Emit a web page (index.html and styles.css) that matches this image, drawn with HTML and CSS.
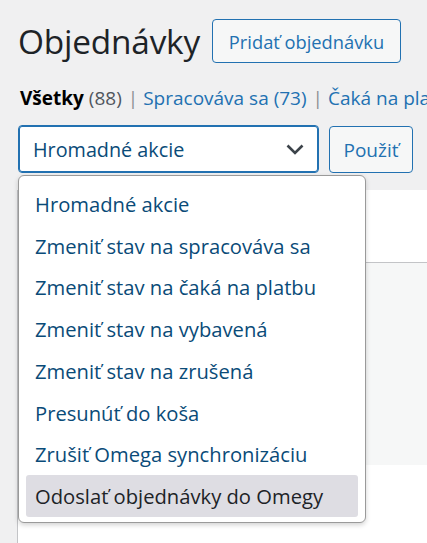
FILE: index.html
```html
<!DOCTYPE html>
<html lang="sk">
<head>
<meta charset="utf-8">
<title>Objednávky</title>
<link rel="stylesheet" href="styles.css">
</head>
<body>
<div class="page">
  <div class="header">
    <h1 class="title">Objednávky</h1>
    <a class="btn btn-add" href="#">Pridať objednávku</a>
  </div>
  <ul class="subsubsub">
    <li><span class="current">Všetky</span> <span class="count">(88)</span></li>
    <li class="sep">|</li>
    <li><a href="#">Spracováva sa <span class="count-link">(73)</span></a></li>
    <li class="sep">|</li>
    <li><a href="#">Čaká na platbu <span class="count-link">(5)</span></a></li>
  </ul>
  <div class="tablenav">
    <div class="select-wrap">
      <div class="select">
        <span>Hromadné akcie</span>
        <svg class="chev" width="18" height="11" viewBox="0 0 18 11"><path d="M1.5 1.5 L9 9 L16.5 1.5" fill="none" stroke="#3c434a" stroke-width="2.6"/></svg>
      </div>
      <ul class="menu">
        <li>Hromadné akcie</li>
        <li>Zmeniť stav na spracováva sa</li>
        <li>Zmeniť stav na čaká na platbu</li>
        <li>Zmeniť stav na vybavená</li>
        <li>Zmeniť stav na zrušená</li>
        <li>Presunúť do koša</li>
        <li>Zrušiť Omega synchronizáciu</li>
        <li class="active">Odoslať objednávky do Omegy</li>
      </ul>
    </div>
    <a class="btn btn-apply" href="#">Použiť</a>
  </div>
  <div class="table">
    <div class="thead"></div>
    <div class="row alt"></div>
    <div class="row"></div>
  </div>
</div>
</body>
</html>
```

FILE: styles.css
```css
* { box-sizing: border-box; }
html, body { margin: 0; padding: 0; }
body {
  background: #f0f0f1;
  font-family: "Open Sans", "Noto Sans", sans-serif;
  color: #1d2327;
  overflow: hidden;
  height: 543px;
}
.page {
  padding-left: 18px;
}
.header {
  display: flex;
  align-items: center;
  padding-top: 19px;
  height: 63px;
}
.title {
  margin: 0;
  font-weight: 400;
  font-size: 33.4px;
  line-height: 44px;
  color: #1d2327;
  letter-spacing: -0.2px;
}
.btn {
  display: inline-flex;
  align-items: center;
  justify-content: center;
  border: 1px solid #2271b1;
  border-radius: 4px;
  background: #f6f7f7;
  color: #2271b1;
  text-decoration: none;
  font-size: 19px;
}
.btn-add {
  margin-left: 12px;
  width: 189px;
  height: 44px;
  font-size: 18.3px;
}
.subsubsub {
  list-style: none;
  margin: 0;
  padding: 0;
  margin-top: 21px;
  display: flex;
  white-space: nowrap;
  overflow: hidden;
  font-size: 19px;
  line-height: 28px;
  padding-left: 2px;
}
.subsubsub li { margin: 0; }
.current { font-weight: 700; color: #000; }
.count { color: #50575e; }
.subsubsub a { color: #2271b1; text-decoration: none; }
.count-link { color: #2271b1; }
.sep { color: #8c8f94; padding: 0 5px 0 6px; }
.tablenav {
  display: flex;
  align-items: flex-start;
  margin-top: 13px;
  position: relative;
  z-index: 2;
}
.select-wrap {
  position: relative;
}
.select {
  width: 301px;
  height: 48px;
  border: 1px solid #2271b1;
  box-shadow: inset 0 0 0 1px #2271b1;
  border-radius: 4px;
  background: #fff;
  display: flex;
  align-items: center;
  justify-content: space-between;
  padding: 0 14px 0 14px;
  color: #0a4b78;
  font-size: 19.8px;
}
.chev { display: block; }
.btn-apply {
  margin-left: 10px;
  margin-top: 1px;
  width: 84px;
  height: 47px;
  font-size: 19px;
}
.menu {
  position: absolute;
  top: 50px;
  left: 0;
  width: 348px;
  height: 348px;
  margin: 0;
  padding: 7px 7px 0 7px;
  list-style: none;
  background: #fff;
  border: 1px solid #9a9a9a;
  border-radius: 6px;
  box-shadow: 0 2px 5px rgba(0,0,0,0.18);
}
.menu li {
  height: 41.75px;
  display: flex;
  align-items: center;
  padding-left: 9px;
  font-size: 20.2px;
  color: #0a4b78;
  border-radius: 3px;
  white-space: nowrap;
}
.menu li.active {
  background: #dedde3;
  color: #1d2327;
}
.table {
  margin-top: 17px;
  margin-left: -1px;
  background: #fff;
  border-left: 1px solid #c3c4c7;
  height: 353px;
}
.thead {
  height: 73px;
  border-bottom: 1px solid #c3c4c7;
}
.row.alt {
  height: 202px;
  background: #f6f7f7;
}
.row { height: 78px; }
```
